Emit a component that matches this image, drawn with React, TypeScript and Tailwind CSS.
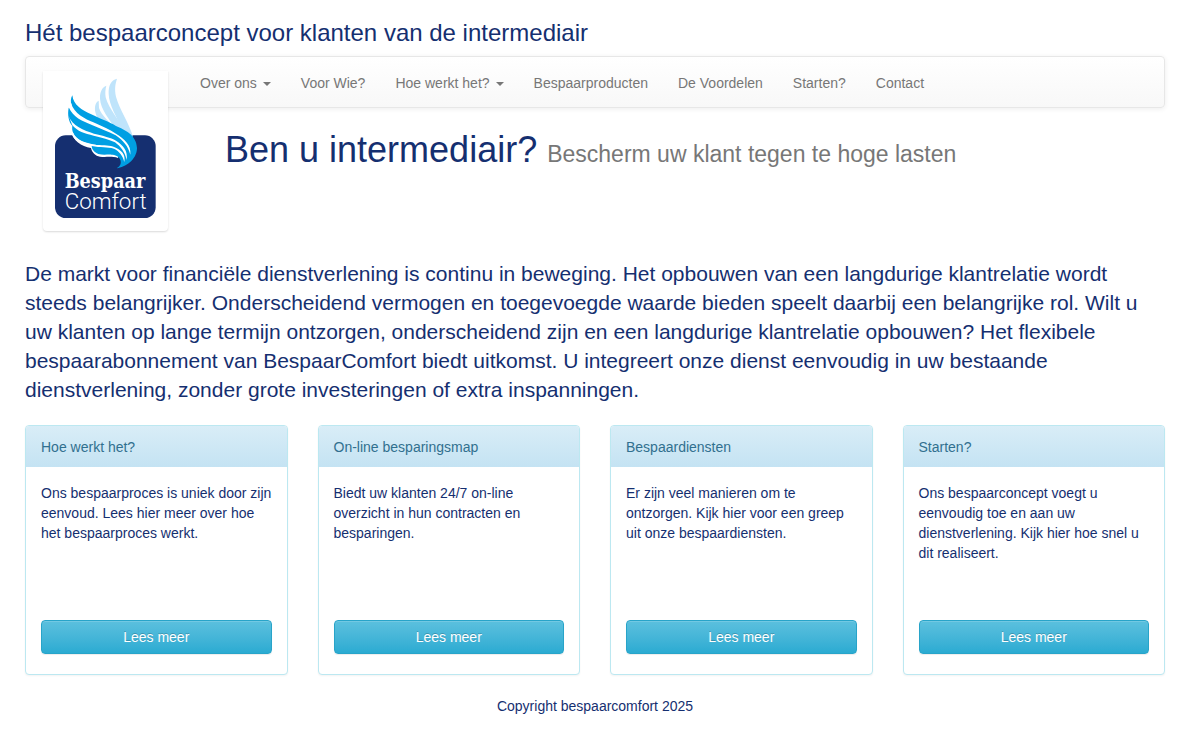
import React from 'react';
import { clsx } from 'clsx';

interface NavItem {
  label: string;
  hasMenu?: boolean;
}

interface Panel {
  title: string;
  text: string;
}

const NAV_ITEMS: NavItem[] = [
  { label: 'Over ons', hasMenu: true },
  { label: 'Voor Wie?' },
  { label: 'Hoe werkt het?', hasMenu: true },
  { label: 'Bespaarproducten' },
  { label: 'De Voordelen' },
  { label: 'Starten?' },
  { label: 'Contact' },
];

const PANELS: Panel[] = [
  {
    title: 'Hoe werkt het?',
    text: 'Ons bespaarproces is uniek door zijn eenvoud. Lees hier meer over hoe het bespaarproces werkt.',
  },
  {
    title: 'On-line besparingsmap',
    text: 'Biedt uw klanten 24/7 on-line overzicht in hun contracten en besparingen.',
  },
  {
    title: 'Bespaardiensten',
    text: 'Er zijn veel manieren om te ontzorgen. Kijk hier voor een greep uit onze bespaardiensten.',
  },
  {
    title: 'Starten?',
    text: 'Ons bespaarconcept voegt u eenvoudig toe en aan uw dienstverlening. Kijk hier hoe snel u dit realiseert.',
  },
];

function Logo() {
  return (
    <svg viewBox="54 33 309 426" className="h-[142px] w-[103px]" role="img" aria-label="Bespaar Comfort">
      <rect x="57" y="208" width="302" height="248" rx="32" fill="#152f70" />

      {/* light feathers */}
      <g fill="#bfe4fb">
        <path d="M243 38C225 42 217 58 218 84C219 118 242 152 264 202L291 212C280 172 250 130 240 92C235 68 238 54 243 38Z" />
        <path d="M211 59C198 64 191 78 192 98C194 130 220 160 242 192L272 206C254 166 218 130 209 94C207 80 208 70 211 59Z" />
        <path d="M188 104C178 110 175 122 178 138C180 150 186 158 192 166L244 192C220 168 196 148 189 126Z" />
      </g>

      {/* white rim under the wing, the blue wing, then the slits that split it into feathers */}
      <path
        d="M106 196C110 224 136 242 165 246C168 260 178 270 192 272C210 274 230 270 246 276L250 262L182 232Z"
        fill="#fff"
      />
      <path
        d="M109 88C112 118 138 132 164 144C196 160 218 166 240 180C266 192 302 206 303 247C302 282 268 304 242 307C252 300 256 294 254 284C250 270 236 266 227 266C214 265 202 268 187 264C175 258 168 252 167 240L182 237C150 232 118 222 112 202C108 194 108 186 109 180C98 168 94 146 98 126L107 118C103 108 104 96 109 88Z"
        fill="#009fe3"
      />
      <g fill="#fff">
        <path d="M105 110C114 144 148 158 172 169C200 182 222 191 240 203C266 220 286 236 283 266C276 240 262 224 239 208C220 198 192 187 166 176C138 166 112 154 98 124Z" />
        <path d="M97 148C108 180 144 194 174 203C202 210 224 214 240 224C262 238 276 254 272 282C266 256 254 242 237 229C220 220 198 215 173 209C146 203 124 196 109 178Z" />
        <path d="M110 198C124 228 156 234 182 237C204 238 222 237 236 244C254 252 270 264 265 288C260 268 250 256 234 248C214 242 194 246 167 240C140 240 112 222 108 205Z" />
      </g>

      <g fill="#fff">
        <text x="86" y="366" className="font-['DejaVu_Serif_Condensed','DejaVu_Serif'] text-[59px] font-bold">
          Bespaar
        </text>
        <text x="86" y="429" className="font-['Roboto'] text-[67px] font-light">
          Comfort
        </text>
      </g>
    </svg>
  );
}

function Navbar() {
  return (
    <nav className="flex h-[52px] items-start rounded border border-[#e7e7e7] bg-linear-to-b from-white to-[#f8f8f8] pl-[17px] shadow-[inset_0_1px_0_rgba(255,255,255,.15),0_1px_5px_rgba(0,0,0,.075)]">
      <a
        href="#"
        className="mt-[14px] mr-[17px] flex h-[160px] w-[125px] shrink-0 justify-center rounded-b bg-white pt-[6px] shadow-[0_1px_2px_rgba(0,0,0,.15)]"
      >
        <Logo />
      </a>
      <ul className="flex">
        {NAV_ITEMS.map((item) => (
          <li key={item.label}>
            <a
              href="#"
              className={clsx(
                'flex items-center px-[15px] py-4 text-sm leading-5 whitespace-nowrap text-[#777] hover:text-[#333]',
                item.hasMenu && 'gap-[6px]'
              )}
            >
              {item.label}
              {item.hasMenu && (
                <span className="mt-px border-x-4 border-t-4 border-x-transparent border-t-[#777]" />
              )}
            </a>
          </li>
        ))}
      </ul>
    </nav>
  );
}

function InfoPanel({ title, text }: Panel) {
  return (
    <section className="flex min-h-[250px] flex-col rounded border border-[#bce8f1] bg-white shadow-[0_1px_2px_rgba(0,0,0,.05)]">
      <h3 className="rounded-t-[3px] bg-linear-to-b from-[#d9edf7] to-[#c4e3f3] px-[15px] pt-[11px] pb-[10px] leading-5 text-[#31708f]">
        {title}
      </h3>
      <div className="flex flex-1 flex-col justify-between px-[15px] pt-4 pb-5">
        <p>{text}</p>
        <button
          type="button"
          className="h-[34px] w-full cursor-pointer rounded border border-[#28a4c9] bg-linear-to-b from-[#5bc0de] to-[#2aabd2] text-white shadow-[inset_0_1px_0_rgba(255,255,255,.15),0_1px_1px_rgba(0,0,0,.075)] [text-shadow:0_-1px_0_rgba(0,0,0,.2)]"
        >
          Lees meer
        </button>
      </div>
    </section>
  );
}

export default function App() {
  return (
    <div className="bg-white pt-5 pr-[18px] pb-5 pl-[25px] font-['Helvetica_Neue',Helvetica,'Liberation_Sans',Arial,sans-serif] text-sm leading-5 text-[#152f70]">
      <header>
        <h2 className="mb-[10px] text-2xl leading-[26px]">Hét bespaarconcept voor klanten van de intermediair</h2>
        <Navbar />
      </header>

      <main>
        <h1 className="mt-[22px] mb-px min-h-32 pl-[200px] text-4xl leading-10">
          Ben u intermediair?{' '}
          <small className="text-[23px] leading-none text-[#777]">Bescherm uw klant tegen te hoge lasten</small>
        </h1>
        <p className="mb-[21px] text-[21px] leading-[29px]">
          De markt voor financiële dienstverlening is continu in beweging. Het opbouwen van een langdurige
          klantrelatie wordt steeds belangrijker. Onderscheidend vermogen en toegevoegde waarde bieden speelt
          daarbij een belangrijke rol. Wilt u uw klanten op lange termijn ontzorgen, onderscheidend zijn en een
          langdurige klantrelatie opbouwen? Het flexibele bespaarabonnement van BespaarComfort biedt uitkomst. U
          integreert onze dienst eenvoudig in uw bestaande dienstverlening, zonder grote investeringen of extra
          inspanningen.
        </p>
        <div className="grid grid-cols-1 gap-[30px] sm:grid-cols-2 lg:grid-cols-4">
          {PANELS.map((panel) => (
            <InfoPanel key={panel.title} {...panel} />
          ))}
        </div>
      </main>

      <footer className="mt-[21px] text-center">Copyright bespaarcomfort 2025</footer>
    </div>
  );
}
